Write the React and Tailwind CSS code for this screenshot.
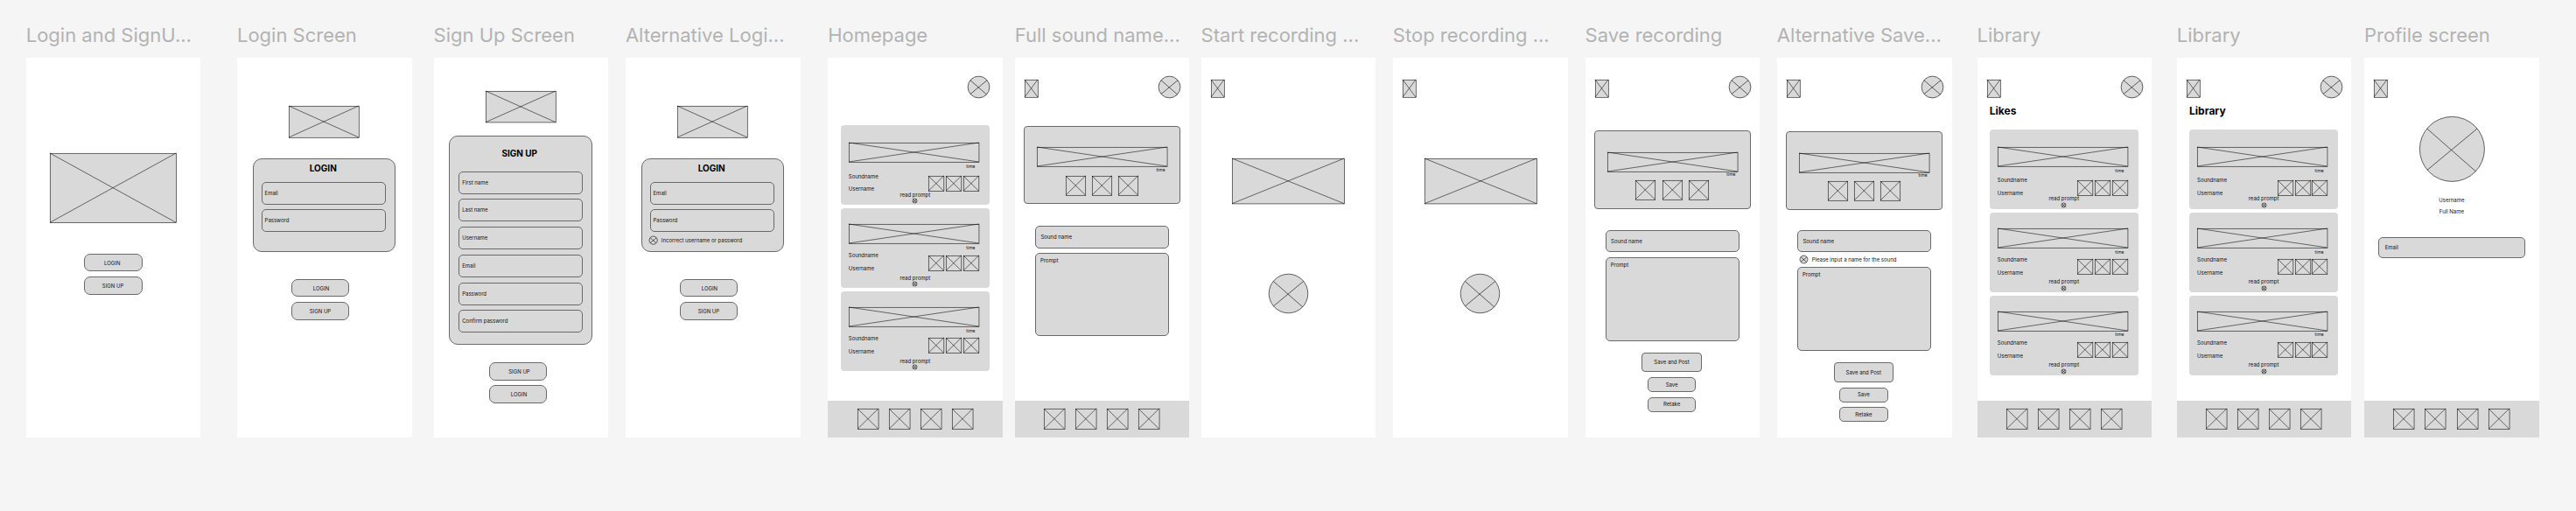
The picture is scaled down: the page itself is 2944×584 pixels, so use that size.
import React from "react";
import clsx from "clsx";

/* Wireframe primitives */

function CrossBox({ className, filled = true }) {
  return (
    <svg className={clsx("block shrink-0 overflow-visible", className)} stroke="#000" strokeWidth="0.55">
      <rect x="0.25" y="0.25" width="100%" height="100%" fill={filled ? "#d9d9d9" : "none"} />
      <line x1="0" y1="0" x2="100%" y2="100%" />
      <line x1="100%" y1="0" x2="0" y2="100%" />
    </svg>
  );
}

function CrossCircle({ className, strokeWidth = 0.6 }) {
  return (
    <svg
      viewBox="0 0 100 100"
      className={clsx("block shrink-0 overflow-visible", className)}
      fill="#d9d9d9"
      stroke="#000"
      strokeWidth={strokeWidth}
    >
      <circle cx="50" cy="50" r="49.5" vectorEffect="non-scaling-stroke" />
      <line x1="12" y1="19" x2="86" y2="84" vectorEffect="non-scaling-stroke" />
      <line x1="88" y1="19" x2="12" y2="82" vectorEffect="non-scaling-stroke" />
    </svg>
  );
}

function Button({ className, children }) {
  return (
    <div
      className={clsx(
        "flex shrink-0 items-center justify-center whitespace-nowrap border border-[#6a6a6a] bg-[#d9d9d9] text-[6px] leading-[8px]",
        className
      )}
    >
      {children}
    </div>
  );
}

function Field({ className, children }) {
  return (
    <div
      className={clsx(
        "flex shrink-0 items-center whitespace-nowrap rounded-[5px] border border-[#6a6a6a] bg-[#d9d9d9] text-[6px] leading-[8px]",
        className
      )}
    >
      {children}
    </div>
  );
}

function Frame({ title, className, children }) {
  return (
    <section className={clsx("flex w-[199.7px] shrink-0 flex-col", className)}>
      <h2 className="mt-[26px] h-[40px] whitespace-nowrap text-[22px] leading-[28px] text-[#b3b3b3]">{title}</h2>
      <div className="flex h-[433.5px] flex-col items-start bg-white">{children}</div>
    </section>
  );
}

function Header({ back = true, avatar = true, avatarClass = "mr-[10px]" }) {
  return (
    <div className="flex h-[45.9px] w-full shrink-0 items-start justify-between pt-[20.9px]">
      {back ? <CrossBox className="mt-[4.4px] ml-[11.4px] h-[20px] w-[15px]" /> : <span />}
      {avatar && <CrossCircle className={clsx("h-[25px] w-[25px]", avatarClass)} />}
    </div>
  );
}

function NavBar() {
  return (
    <nav className="mt-auto flex h-[41.7px] w-full shrink-0 items-start gap-[12.3px] bg-[#d9d9d9] pt-[9.3px] pl-[33.3px]">
      {[0, 1, 2, 3].map((i) => (
        <CrossBox key={i} filled={false} className="h-[23.3px] w-[23.8px]" />
      ))}
    </nav>
  );
}

/* Login and sign up */

function LoginPanel({ className, error }) {
  return (
    <div
      className={clsx(
        "mt-[23.9px] flex h-[107.3px] w-[163.7px] shrink-0 flex-col items-start rounded-[10px] border border-[#6a6a6a] bg-[#d9d9d9]",
        className
      )}
    >
      <h3 className="mt-[4.9px] w-[159px] text-center text-[10px] font-bold leading-[10px] text-black">LOGIN</h3>
      <Field className="mt-[10.5px] ml-[8.8px] h-[26px] w-[142px] pl-[3px]">Email</Field>
      <Field className="mt-[5.7px] ml-[8.8px] h-[26px] w-[142px] pl-[3px]">Password</Field>
      {error && (
        <div className="mt-[4.5px] ml-[8.4px] flex items-center gap-[4.4px] whitespace-nowrap text-[6px] leading-[8px]">
          <CrossCircle className="h-[9.3px] w-[9.3px]" />
          <span className="mt-[1px]">{error}</span>
        </div>
      )}
    </div>
  );
}

function LoginBody({ error }) {
  return (
    <>
      <CrossBox className="mt-[55.3px] ml-[59.3px] h-[36px] w-[80px]" />
      <LoginPanel className="ml-[17.8px]" error={error} />
      <Button className="mt-[30.1px] ml-[62px] h-[20.9px] w-[66px] rounded-[7px] pt-[1px] pl-[2px]">LOGIN</Button>
      <Button className="mt-[5.2px] ml-[62px] h-[20.9px] w-[66px] rounded-[7px] pt-[1px]">SIGN UP</Button>
    </>
  );
}

function SignUpBody() {
  const fields = ["First name", "Last name", "Username", "Email", "Password", "Confirm password"];
  return (
    <>
      <CrossBox className="mt-[38px] ml-[59.4px] h-[35.7px] w-[80px]" />
      <div className="mt-[15.7px] ml-[17.7px] flex h-[238.4px] w-[163.7px] shrink-0 flex-col items-start rounded-[10px] border border-[#6a6a6a] bg-[#d9d9d9]">
        <h3 className="mt-[13.4px] w-[159px] text-center text-[10px] font-bold leading-[10px] text-black">SIGN UP</h3>
        <div className="mt-[15.8px] ml-[9.8px] flex flex-col gap-[5.75px]">
          {fields.map((f) => (
            <Field key={f} className="h-[26px] w-[142px] pl-[3.2px]">
              {f}
            </Field>
          ))}
        </div>
      </div>
      <Button className="mt-[20.4px] ml-[63.7px] h-[20.4px] w-[66px] rounded-[7px] pt-[1px] pl-[2.5px]">SIGN UP</Button>
      <Button className="mt-[5.7px] ml-[63.7px] h-[20.4px] w-[66px] rounded-[7px] pt-[1px] pl-[1.5px]">LOGIN</Button>
    </>
  );
}

/* Sound feed */

function SoundCard({ first, last }) {
  return (
    <article className="flex h-[91px] w-[170.2px] shrink-0 flex-col items-start rounded-[4px] bg-[#d9d9d9] pl-[9px] text-[6px] leading-[4px]">
      <CrossBox filled={false} className={clsx("h-[22px] w-[148.7px]", first ? "mt-[20.2px]" : "mt-[18.3px]")} />
      <div
        className={clsx(
          "ml-[134.5px] text-[5px]",
          first ? "mt-[2.7px] mb-[7.6px]" : last ? "mt-[2.4px] mb-[5.7px]" : "mt-[3.1px] mb-[5px]"
        )}
      >
        time
      </div>
      <div className="flex w-[149px] items-start justify-between">
        <div className="flex flex-col gap-[10.9px]">
          <span>Soundname</span>
          <span>Username</span>
        </div>
        <div className={clsx("flex gap-[2.3px]", first ? "mt-[1.6px]" : "mt-[1.2px]")}>
          {[0, 1, 2].map((i) => (
            <CrossBox key={i} filled={false} className="h-[17.3px] w-[17.6px]" />
          ))}
        </div>
      </div>
      <div className={clsx("ml-[58.6px] flex flex-col items-center gap-[2.6px]", first ? "mt-[2.2px]" : "mt-[6.4px]")}>
        <span className="whitespace-nowrap">read prompt</span>
        <CrossCircle className="h-[5px] w-[5px]" />
      </div>
    </article>
  );
}

function Feed({ className }) {
  return (
    <div className={clsx("flex flex-col gap-[3.9px]", className)}>
      <SoundCard first />
      <SoundCard />
      <SoundCard last />
    </div>
  );
}

function LibraryBody({ heading }) {
  return (
    <>
      <Header />
      <h3 className="mt-[9.6px] ml-[14.3px] text-[12px] font-bold leading-[12px] text-black">{heading}</h3>
      <Feed className="mt-[14.4px] ml-[14.3px]" />
      <NavBar />
    </>
  );
}

/* Recording */

function Player({ className }) {
  return (
    <div
      className={clsx(
        "ml-[10.3px] flex h-[89.6px] w-[179.2px] shrink-0 flex-col items-start rounded-[4px] border border-[#6a6a6a] bg-[#d9d9d9]",
        className
      )}
    >
      <CrossBox filled={false} className="mt-[23.8px] ml-[14.1px] h-[22px] w-[148.8px]" />
      <div className="mt-[1.6px] ml-[150.5px] text-[5px] leading-[4px]">time</div>
      <div className="mt-[4.8px] ml-[46.6px] flex gap-[7.8px]">
        {[0, 1, 2].map((i) => (
          <CrossBox key={i} filled={false} className="h-[22px] w-[22.5px]" />
        ))}
      </div>
    </div>
  );
}

function PromptBox({ className }) {
  return (
    <div
      className={clsx(
        "ml-[23.2px] h-[95.8px] w-[153.2px] shrink-0 rounded-[5px] border border-[#6a6a6a] bg-[#d9d9d9] pt-[4px] pl-[5px] text-[6px] leading-[8px]",
        className
      )}
    >
      Prompt
    </div>
  );
}

function RecordBody() {
  return (
    <>
      <Header avatar={false} />
      <CrossBox className="mt-[69.4px] ml-[35.7px] h-[51.7px] w-[128.2px]" />
      <CrossCircle className="mt-[79.8px] ml-[77.3px] h-[45px] w-[45px]" />
    </>
  );
}

function SaveBody({ error }) {
  return (
    <>
      <Header />
      <Player className={error ? "mt-[38.2px]" : "mt-[37.1px]"} />
      <Field className={clsx("ml-[23.2px] h-[25px] w-[153.2px] pl-[5.4px]", error ? "mt-[23.8px]" : "mt-[24.9px]")}>
        Sound name
      </Field>
      {error && (
        <div className="mt-[3.8px] ml-[25.9px] flex items-center gap-[5px] whitespace-nowrap text-[6px] leading-[8px]">
          <CrossCircle className="h-[9px] w-[9px]" />
          <span>{error}</span>
        </div>
      )}
      <PromptBox className={error ? "mt-[4.2px]" : "mt-[5.5px]"} />
      <Button className="mt-[13.2px] ml-[64.8px] h-[22.4px] w-[68.4px] rounded-[4px]">Save and Post</Button>
      <Button className="mt-[5.7px] ml-[71.5px] h-[17.1px] w-[55.2px] rounded-[5px]">Save</Button>
      <Button className="mt-[5.7px] ml-[71.5px] h-[17.1px] w-[55.2px] rounded-[5px]">Retake</Button>
    </>
  );
}

export default function App() {
  return (
    <main className="flex h-[584px] w-[2944px] items-start overflow-hidden bg-[#f5f5f5] font-['Inter',sans-serif] text-[#111111]">
      <Frame title="Login and SignU..." className="ml-[29.7px]">
        <CrossBox className="mt-[109.3px] ml-[27.6px] h-[79.3px] w-[144.2px]" />
        <Button className="mt-[35.2px] ml-[66.7px] h-[20.6px] w-[66.3px] rounded-[7px] pt-[1px] pr-[2.5px]">LOGIN</Button>
        <Button className="mt-[5.9px] ml-[66.7px] h-[20.6px] w-[66.3px] rounded-[7px] pt-[1px] pr-[1px]">SIGN UP</Button>
      </Frame>
      <Frame title="Login Screen" className="ml-[41.6px]">
        <LoginBody />
      </Frame>
      <Frame title="Sign Up Screen" className="ml-[24.9px]">
        <SignUpBody />
      </Frame>
      <Frame title="Alternative Logi..." className="ml-[19.7px]">
        <LoginBody error="Incorrect username or password" />
      </Frame>
      <Frame title="Homepage" className="ml-[31.6px]">
        <Header back={false} avatarClass="mr-[14.7px]" />
        <Feed className="mt-[31.2px] ml-[14.6px]" />
        <NavBar />
      </Frame>
      <Frame title="Full sound name..." className="ml-[13.8px]">
        <Header />
        <Player className="mt-[31.7px]" />
        <Field className="mt-[24.9px] ml-[23.3px] h-[25.6px] w-[153.4px] pl-[5.4px]">Sound name</Field>
        <PromptBox className="mt-[5px]" />
        <NavBar />
      </Frame>
      <Frame title="Start recording ..." className="ml-[13.2px]">
        <RecordBody />
      </Frame>
      <Frame title="Stop recording ..." className="ml-[19.6px]">
        <RecordBody />
      </Frame>
      <Frame title="Save recording" className="ml-[20px]">
        <SaveBody />
      </Frame>
      <Frame title="Alternative Save..." className="ml-[19.6px]">
        <SaveBody error="Please input a name for the sound" />
      </Frame>
      <Frame title="Library" className="ml-[29px]">
        <LibraryBody heading="Likes" />
      </Frame>
      <Frame title="Library" className="ml-[28.6px]">
        <LibraryBody heading="Library" />
      </Frame>
      <Frame title="Profile screen" className="ml-[14.6px]">
        <Header avatar={false} />
        <CrossCircle className="mt-[21.1px] ml-[62.7px] h-[74.8px] w-[74.8px]" />
        <div className="mt-[17.2px] flex w-full flex-col items-center gap-[5.4px] text-[6px] leading-[8px]">
          <span>Username</span>
          <span>Full Name</span>
        </div>
        <Field className="mt-[24.7px] ml-[15.7px] h-[23.5px] w-[168.6px] pl-[7px]">Email</Field>
        <NavBar />
      </Frame>
    </main>
  );
}
